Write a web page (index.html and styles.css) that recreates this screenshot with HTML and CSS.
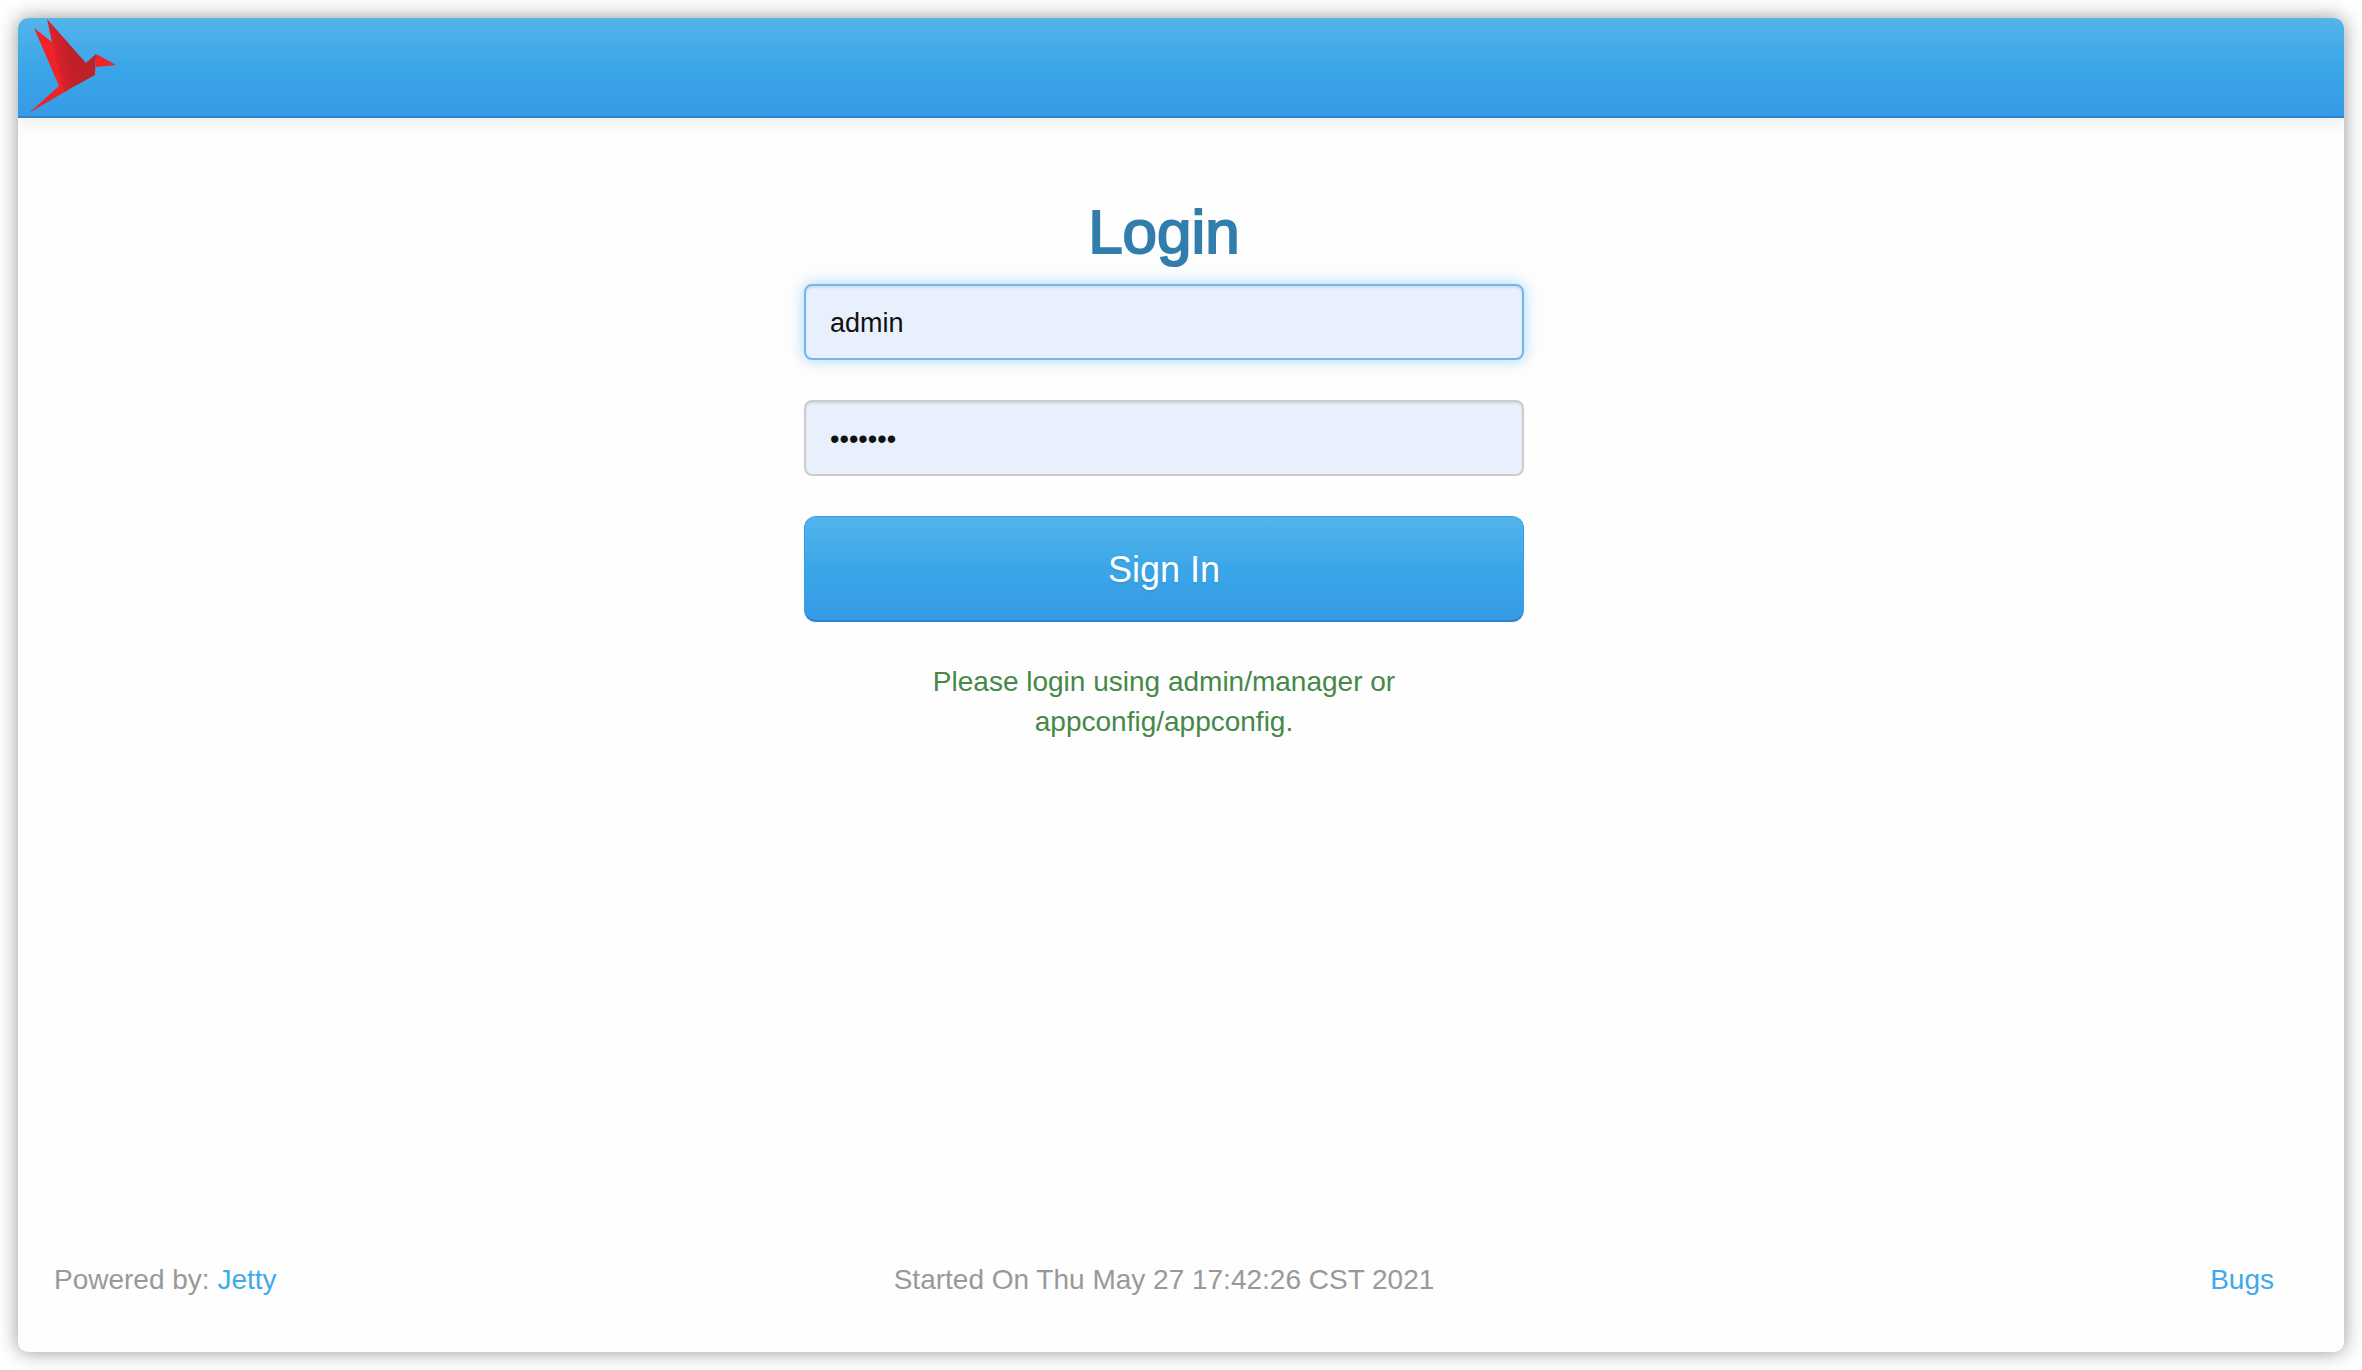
FILE: index.html
```html
<!DOCTYPE html>
<html lang="en">
<head>
<meta charset="utf-8">
<title>Login</title>
<link rel="stylesheet" href="styles.css">
</head>
<body>
<div class="window">
  <header class="navbar">
    <a class="brand" href="#" aria-label="Home">
      <svg class="logo" viewBox="0 0 100 100" aria-hidden="true">
        <defs>
          <linearGradient id="wing" x1="0" y1="0.3" x2="1" y2="0">
            <stop offset="0.1" stop-color="#dc2229"/>
            <stop offset="0.35" stop-color="#c22029"/>
            <stop offset="1" stop-color="#ba2027"/>
          </linearGradient>
        </defs>
        <path fill="#ee2427" d="M16 10 34 24 40 40 50 72 11 95 41 68Z"/>
        <path fill="url(#wing)" d="M29 1 68 45 78 36 77 57 46 74 34 24Z"/>
        <path fill="#ee2427" d="M78 36 98 47 78 49Z"/>
      </svg>
    </a>
  </header>
  <main class="content">
    <form class="login">
      <h1 class="title">Login</h1>
      <input class="field field-active" type="text" name="username" value="admin" aria-label="Username">
      <input class="field" type="password" name="password" value="manager" aria-label="Password">
      <button class="submit" type="submit">Sign In</button>
      <p class="hint">Please login using admin/manager or appconfig/appconfig.</p>
    </form>
  </main>
  <footer class="footer">
    <span>Powered by: <a href="#">Jetty</a></span>
    <span>Started On Thu May 27 17:42:26 CST 2021</span>
    <a class="bugs" href="#">Bugs</a>
  </footer>
</div>
</body>
</html>
```
FILE: styles.css
```css
* {
  box-sizing: border-box;
}

body {
  margin: 0;
  min-height: 100vh;
  padding: 18px;
  display: flex;
  background: #fff;
  color: #999;
  font: 28px/40px "Liberation Sans", Arial, sans-serif;
}

a {
  color: #3fa9ea;
  text-decoration: none;
}

.window {
  flex: 1;
  display: flex;
  flex-direction: column;
  border-radius: 10px;
  background: #fefefe;
  box-shadow: 0 0 20px rgba(0, 0, 0, 0.42);
  overflow: hidden;
}

.navbar {
  height: 100px;
  border-bottom: 2px solid #2b86cf;
  background: linear-gradient(#54b4eb, #3aa6e8 50%, #369be6);
  box-shadow: 0 2px 20px rgba(0, 0, 0, 0.1);
}

.brand {
  display: inline-block;
}

.logo {
  display: block;
  width: 100px;
  height: 100px;
}

.content {
  flex: 1;
  padding: 74px 34px 40px 0;
}

.login {
  display: flex;
  flex-direction: column;
  gap: 40px;
  width: 720px;
  max-width: 100%;
  margin: 0 auto;
}

/* Medium weight: the regular face thickened by a thin stroke */
.title {
  margin: 0 0 -28px;
  color: #317eac;
  font-size: 62px;
  font-weight: 400;
  line-height: 80px;
  text-align: center;
  -webkit-text-stroke: 2px #317eac;
}

.field {
  height: 76px;
  padding: 2px 24px 0;
  border: 2px solid #ccc;
  border-radius: 8px;
  outline: 0;
  background: #e8effd;
  box-shadow: inset 0 2px 2px rgba(0, 0, 0, 0.08);
  color: #111;
  font: 27px "Liberation Sans", Arial, sans-serif;
}

.field-active {
  border-color: #70b7ec;
  box-shadow: inset 0 2px 2px rgba(0, 0, 0, 0.08), 0 0 16px rgba(82, 168, 236, 0.5);
}

.submit {
  height: 106px;
  padding: 2px 24px 0;
  border: 1px solid #2fa0e6;
  border-bottom: 2px solid #2b86cf;
  border-radius: 12px;
  background: linear-gradient(#54b4eb, #3aa6e8 50%, #369be6);
  color: #fff;
  font: 36px "Liberation Sans", Arial, sans-serif;
  text-shadow: 0 2px 2px rgba(0, 0, 0, 0.08);
}

.hint {
  margin: 0;
  padding: 0 120px;
  color: #468847;
  text-align: center;
}

.footer {
  display: grid;
  grid-template-columns: 1fr auto 1fr;
  padding: 0 70px 52px 36px;
}

.bugs {
  justify-self: end;
}
```
